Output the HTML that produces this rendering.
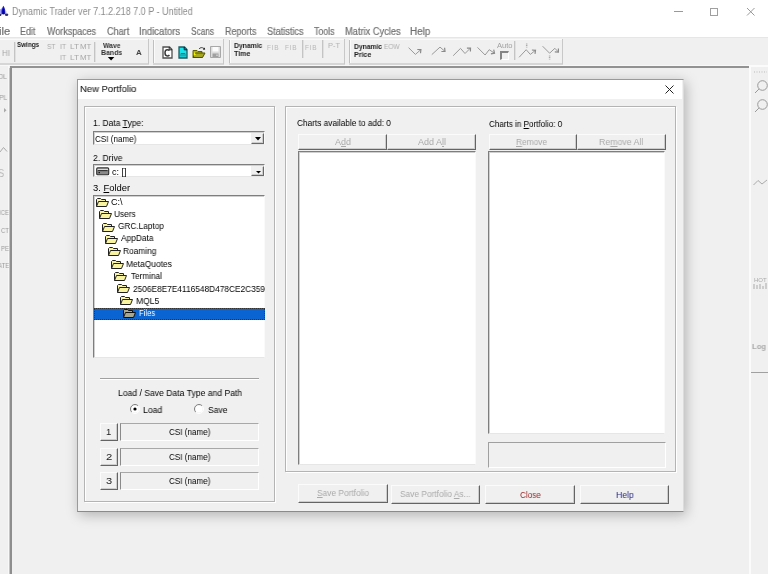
<!DOCTYPE html><html><head><meta charset="utf-8"><style>
*{margin:0;padding:0;box-sizing:border-box}
html,body{width:768px;height:574px;overflow:hidden;background:#f0f0f0;font-family:"Liberation Sans",sans-serif}
.a{position:absolute}
.t{position:absolute;white-space:nowrap;line-height:1;transform-origin:0 0;font-family:"Liberation Sans",sans-serif;will-change:transform;-webkit-text-stroke:0}
.btn{position:absolute;background:#f0f0f0;border-top:1px solid #fbfbfb;border-left:1px solid #fbfbfb;border-right:1px solid #646464;border-bottom:1px solid #646464;box-shadow:inset -1px -1px 0 #cdcdcd}
.sunk{position:absolute;border-top:1px solid #7e7e7e;border-left:1px solid #7e7e7e;border-right:1px solid #fafafa;border-bottom:1px solid #e6e6e6;box-shadow:inset 1px 1px 0 #d0d0d0}
.grp{position:absolute;border:1px solid #b4b4b4;box-shadow:inset 1px 1px 0 #fff, 1px 1px 0 #fff}
.vsep{position:absolute;width:2px;border-left:1px solid #c0c0c0;border-right:1px solid #fff}
</style></head><body>
<div class="a" style="left:0;top:0;width:768px;height:38px;background:#fff"></div>
<svg class="a" style="left:0;top:3px" width="10" height="14" viewBox="0 3 10 14"><path d="M0 9.5L2.2 8V14.5L0 15.5Z" fill="#a0a0f4"/><path d="M3.4 5.8C4.8 8.2 5.8 10.8 5.4 13.2Q3.4 15.6 1.6 13.2C1.1 10.8 2 8.2 3.4 5.8Z" fill="#1818c8"/><path d="M3.4 8C4.2 10 4.6 12 4.3 13.6Q3.4 14.6 2.5 13.6C2.3 12 2.6 10 3.4 8Z" fill="#000090"/><ellipse cx="6.6" cy="14.8" rx="1.7" ry="1.2" fill="#303078"/><ellipse cx="0.4" cy="15" rx="1" ry="1.1" fill="#303058"/><path d="M5.2 10L6.5 12.5" stroke="#c8c8f8" stroke-width="1"/></svg>
<div class="a" style="left:674px;top:11px;width:9px;height:1px;background:#999"></div>
<div class="a" style="left:710px;top:8px;width:8px;height:8px;border:1px solid #a0a0a0"></div>
<svg class="a" style="left:746px;top:7px" width="10" height="10" viewBox="0 0 10 10"><path d="M1 1L8.5 8.5M8.5 1L1 8.5" stroke="#999" stroke-width="1"/></svg>
<div class="a" style="left:0;top:37px;width:768px;height:29px;background:#f0f0f0"></div>
<div class="a" style="left:0;top:37px;width:768px;height:1px;background:#e6e6e6"></div>
<div class="a" style="left:0px;top:39px;width:149px;height:1px;background:#fafafa"></div>
<div class="a" style="left:0px;top:63px;width:149px;height:2px;background:#d6d6d6"></div>
<div class="a" style="left:148px;top:39px;width:1px;height:25px;background:#c8c8c8"></div>
<div class="a" style="left:153px;top:39px;width:71px;height:1px;background:#fafafa"></div>
<div class="a" style="left:153px;top:63px;width:71px;height:2px;background:#d6d6d6"></div>
<div class="a" style="left:223px;top:39px;width:1px;height:25px;background:#c8c8c8"></div>
<div class="a" style="left:229px;top:39px;width:116px;height:1px;background:#fafafa"></div>
<div class="a" style="left:229px;top:63px;width:116px;height:2px;background:#d6d6d6"></div>
<div class="a" style="left:344px;top:39px;width:1px;height:25px;background:#c8c8c8"></div>
<div class="a" style="left:349px;top:39px;width:214px;height:1px;background:#fafafa"></div>
<div class="a" style="left:349px;top:63px;width:214px;height:2px;background:#d6d6d6"></div>
<div class="a" style="left:562px;top:39px;width:1px;height:25px;background:#c8c8c8"></div>
<div class="a" style="left:0;top:65px;width:768px;height:1px;background:#f8f8f8"></div>
<div class="a" style="left:153px;top:40px;width:1px;height:23px;background:#c0c0c0"></div>
<div class="a" style="left:154px;top:40px;width:1px;height:23px;background:#fbfbfb"></div>
<div class="a" style="left:229px;top:40px;width:1px;height:23px;background:#c0c0c0"></div>
<div class="a" style="left:230px;top:40px;width:1px;height:23px;background:#fbfbfb"></div>
<div class="a" style="left:349px;top:40px;width:1px;height:23px;background:#c0c0c0"></div>
<div class="a" style="left:350px;top:40px;width:1px;height:23px;background:#fbfbfb"></div>
<div class="a" style="left:14px;top:42px;width:1px;height:20px;background:#c4c4c4"></div>
<div class="a" style="left:15px;top:42px;width:1px;height:20px;background:#e0e0e0"></div>
<div class="a" style="left:94px;top:42px;width:1px;height:20px;background:#c4c4c4"></div>
<div class="a" style="left:95px;top:42px;width:1px;height:20px;background:#e0e0e0"></div>
<div class="a" style="left:302px;top:40px;width:1px;height:18px;background:#c4c4c4"></div>
<div class="a" style="left:303px;top:40px;width:1px;height:18px;background:#e0e0e0"></div>
<div class="a" style="left:322px;top:40px;width:1px;height:18px;background:#c4c4c4"></div>
<div class="a" style="left:323px;top:40px;width:1px;height:18px;background:#e0e0e0"></div>
<div class="a" style="left:514px;top:41px;width:1px;height:19px;background:#c4c4c4"></div>
<div class="a" style="left:515px;top:41px;width:1px;height:19px;background:#e0e0e0"></div>
<div class="a" style="left:10px;top:66px;width:739px;height:2px;background:#929292"></div>
<div class="a" style="left:10px;top:66px;width:2px;height:508px;background:#8e8e8e"></div>
<div class="a" style="left:9px;top:68px;width:1px;height:506px;background:#c4c4c4"></div>
<div class="a" style="left:8px;top:65px;width:1px;height:509px;background:#f8f8f8"></div>
<div class="a" style="left:749px;top:66px;width:2px;height:508px;background:#fbfbfb"></div>
<div class="a" style="left:749px;top:65px;width:19px;height:2px;background:#fbfbfb"></div>
<div class="a" style="left:751px;top:372px;width:17px;height:1px;background:#a0a0a0"></div>
<div class="a" style="left:77px;top:79px;width:607px;height:433px;background:#f0f0f0;border:1px solid #9a9a9a;border-right-color:#dcdcdc;border-bottom-color:#8a8a8a;box-shadow:2px 3px 12px rgba(0,0,0,0.26)"></div>
<div class="a" style="left:78px;top:80px;width:604px;height:19px;background:#fff"></div>
<svg class="a" style="left:665px;top:85px" width="9" height="9" viewBox="0 0 9 9"><path d="M0.5 0.5L8.5 8.5M8.5 0.5L0.5 8.5" stroke="#222" stroke-width="1"/></svg>
<div class="grp" style="left:84px;top:106px;width:191px;height:396px"></div>
<div class="grp" style="left:285px;top:106px;width:391px;height:366px"></div>
<div class="sunk" style="left:93px;top:131px;width:172px;height:14px;background:#fff"></div>
<div class="btn" style="left:251px;top:133px;width:13px;height:11px;border-color:#f0f0f0 #696969 #696969 #f0f0f0"></div>
<svg class="a" style="left:255px;top:137px" width="6" height="4" viewBox="0 0 6 4"><path d="M0 0H6L3 3.5Z" fill="#000"/></svg>
<div class="sunk" style="left:93px;top:164px;width:172px;height:13px;background:#fff"></div>
<div class="btn" style="left:251px;top:166px;width:13px;height:10px;border-color:#f0f0f0 #696969 #696969 #f0f0f0"></div>
<svg class="a" style="left:256px;top:171px" width="5" height="3" viewBox="0 0 5 3"><path d="M0 0H5L2.5 2.5Z" fill="#000"/></svg>
<svg class="a" style="left:96px;top:167px" width="14" height="9" viewBox="0 0 14 9"><rect x="0.7" y="0.9" width="12" height="6.8" rx="1" fill="#8a8a8a" stroke="#303030" stroke-width="1.1"/><path d="M1.5 2.3H12" stroke="#f0f0f0" stroke-width="1"/><path d="M2 3.6H11.5" stroke="#303030" stroke-width="1.1"/><rect x="2.6" y="5" width="1.2" height="1.2" fill="#000"/></svg>
<div class="sunk" style="left:93px;top:195px;width:172px;height:163px;background:#fff"></div>
<div class="a" style="left:94px;top:308px;width:171px;height:12px;background:#0a64d2;outline:1px dotted #333;outline-offset:-1px"></div>
<svg class="a" style="left:96px;top:198px" width="13" height="9" viewBox="0 0 13 9"><path d="M0.5 8.5V1.5L1.5 0.5H4.5L5.5 1.5H9.5V3.5" fill="#f8f4a0" stroke="#222" stroke-width="1"/><path d="M0.5 8.5L2.5 3.5H12.5L10.5 8.5Z" fill="#f8f4a0" stroke="#222" stroke-width="1"/></svg>
<svg class="a" style="left:99px;top:210px" width="13" height="9" viewBox="0 0 13 9"><path d="M0.5 8.5V1.5L1.5 0.5H4.5L5.5 1.5H9.5V3.5" fill="#f8f4a0" stroke="#222" stroke-width="1"/><path d="M0.5 8.5L2.5 3.5H12.5L10.5 8.5Z" fill="#f8f4a0" stroke="#222" stroke-width="1"/></svg>
<svg class="a" style="left:102px;top:223px" width="13" height="9" viewBox="0 0 13 9"><path d="M0.5 8.5V1.5L1.5 0.5H4.5L5.5 1.5H9.5V3.5" fill="#f8f4a0" stroke="#222" stroke-width="1"/><path d="M0.5 8.5L2.5 3.5H12.5L10.5 8.5Z" fill="#f8f4a0" stroke="#222" stroke-width="1"/></svg>
<svg class="a" style="left:105px;top:235px" width="13" height="9" viewBox="0 0 13 9"><path d="M0.5 8.5V1.5L1.5 0.5H4.5L5.5 1.5H9.5V3.5" fill="#f8f4a0" stroke="#222" stroke-width="1"/><path d="M0.5 8.5L2.5 3.5H12.5L10.5 8.5Z" fill="#f8f4a0" stroke="#222" stroke-width="1"/></svg>
<svg class="a" style="left:108px;top:247px" width="13" height="9" viewBox="0 0 13 9"><path d="M0.5 8.5V1.5L1.5 0.5H4.5L5.5 1.5H9.5V3.5" fill="#f8f4a0" stroke="#222" stroke-width="1"/><path d="M0.5 8.5L2.5 3.5H12.5L10.5 8.5Z" fill="#f8f4a0" stroke="#222" stroke-width="1"/></svg>
<svg class="a" style="left:111px;top:260px" width="13" height="9" viewBox="0 0 13 9"><path d="M0.5 8.5V1.5L1.5 0.5H4.5L5.5 1.5H9.5V3.5" fill="#f8f4a0" stroke="#222" stroke-width="1"/><path d="M0.5 8.5L2.5 3.5H12.5L10.5 8.5Z" fill="#f8f4a0" stroke="#222" stroke-width="1"/></svg>
<svg class="a" style="left:114px;top:272px" width="13" height="9" viewBox="0 0 13 9"><path d="M0.5 8.5V1.5L1.5 0.5H4.5L5.5 1.5H9.5V3.5" fill="#f8f4a0" stroke="#222" stroke-width="1"/><path d="M0.5 8.5L2.5 3.5H12.5L10.5 8.5Z" fill="#f8f4a0" stroke="#222" stroke-width="1"/></svg>
<svg class="a" style="left:117px;top:284px" width="13" height="9" viewBox="0 0 13 9"><path d="M0.5 8.5V1.5L1.5 0.5H4.5L5.5 1.5H9.5V3.5" fill="#f8f4a0" stroke="#222" stroke-width="1"/><path d="M0.5 8.5L2.5 3.5H12.5L10.5 8.5Z" fill="#f8f4a0" stroke="#222" stroke-width="1"/></svg>
<svg class="a" style="left:120px;top:296px" width="13" height="9" viewBox="0 0 13 9"><path d="M0.5 8.5V1.5L1.5 0.5H4.5L5.5 1.5H9.5V3.5" fill="#f8f4a0" stroke="#222" stroke-width="1"/><path d="M0.5 8.5L2.5 3.5H12.5L10.5 8.5Z" fill="#f8f4a0" stroke="#222" stroke-width="1"/></svg>
<svg class="a" style="left:123px;top:309px" width="13" height="9" viewBox="0 0 13 9"><path d="M0.5 8.5V1.5L1.5 0.5H4.5L5.5 1.5H9.5V3.5" fill="#a8a890" stroke="#111" stroke-width="1"/><path d="M0.5 8.5L2.5 3.5H12.5L10.5 8.5Z" fill="#a8a890" stroke="#111" stroke-width="1"/></svg>
<div class="a" style="left:100px;top:378px;width:159px;height:1px;background:#a0a0a0"></div>
<div class="a" style="left:100px;top:379px;width:159px;height:1px;background:#fff"></div>
<svg class="a" style="left:129px;top:403.3px" width="12" height="12" viewBox="129 403.3 12 12"><circle cx="135" cy="409.3" r="3.6" fill="#fff"/><path d="M138.2 406.1A4.5 4.5 0 0 0 131.8 412.5" fill="none" stroke="#808080" stroke-width="1"/><path d="M138.2 406.1A4.5 4.5 0 0 1 131.8 412.5" fill="none" stroke="#fff" stroke-width="1"/><circle cx="135" cy="409.3" r="1.6" fill="#000"/></svg>
<svg class="a" style="left:192.5px;top:403.3px" width="12" height="12" viewBox="192.5 403.3 12 12"><circle cx="198.5" cy="409.3" r="3.6" fill="#fff"/><path d="M201.7 406.1A4.5 4.5 0 0 0 195.3 412.5" fill="none" stroke="#808080" stroke-width="1"/><path d="M201.7 406.1A4.5 4.5 0 0 1 195.3 412.5" fill="none" stroke="#fff" stroke-width="1"/></svg>
<div class="btn" style="left:100px;top:423px;width:18px;height:18px"></div>
<div class="a" style="left:120px;top:423px;width:139px;height:18px;background:#f0f0f0;border-top:1px solid #a8a8a8;border-left:1px solid #8a8a8a;border-right:1px solid #fff;border-bottom:1px solid #fff"></div>
<div class="btn" style="left:100px;top:448px;width:18px;height:18px"></div>
<div class="a" style="left:120px;top:448px;width:139px;height:18px;background:#f0f0f0;border-top:1px solid #a8a8a8;border-left:1px solid #8a8a8a;border-right:1px solid #fff;border-bottom:1px solid #fff"></div>
<div class="btn" style="left:100px;top:472px;width:18px;height:18px"></div>
<div class="a" style="left:120px;top:472px;width:139px;height:18px;background:#f0f0f0;border-top:1px solid #a8a8a8;border-left:1px solid #8a8a8a;border-right:1px solid #fff;border-bottom:1px solid #fff"></div>
<div class="btn" style="left:298px;top:134px;width:89px;height:16px"></div>
<div class="btn" style="left:387px;top:134px;width:89px;height:16px;border-left-color:#f0f0f0"></div>
<div class="btn" style="left:489px;top:134px;width:88px;height:16px"></div>
<div class="btn" style="left:577px;top:134px;width:89px;height:16px;border-left-color:#f0f0f0"></div>
<div class="sunk" style="left:298px;top:151px;width:178px;height:314px;background:#fff"></div>
<div class="sunk" style="left:488px;top:151px;width:177px;height:283px;background:#fff"></div>
<div class="a" style="left:488px;top:442px;width:178px;height:26px;background:#f0f0f0;border-top:1px solid #a0a0a0;border-left:1px solid #a0a0a0;border-right:1px solid #fff;border-bottom:1px solid #fff"></div>
<div class="btn" style="left:298px;top:484px;width:90px;height:19px"></div>
<div class="btn" style="left:391px;top:485px;width:89px;height:19px"></div>
<div class="btn" style="left:485px;top:485px;width:90px;height:19px"></div>
<div class="btn" style="left:580px;top:485px;width:89px;height:19px"></div>
<svg class="a" style="left:162px;top:46px" width="11" height="13" viewBox="0 0 11 13"><path d="M1 1H7.5L10 3.5V12H1Z" fill="#fff" stroke="#505050" stroke-width="1.3"/><path d="M7.2 1V3.8H10" fill="none" stroke="#222" stroke-width="1"/><path d="M7.4 4.6Q6.8 3.7 5.3 3.7Q3 3.7 3 6.8Q3 9.9 5.3 9.9Q6.8 9.9 7.4 9" fill="none" stroke="#3a3a3a" stroke-width="1.5"/></svg>
<svg class="a" style="left:178px;top:46px" width="10" height="13" viewBox="0 0 10 13"><path d="M1 1H6.5L9 3.5V12H1Z" fill="#18e4ec" stroke="#1e5a60" stroke-width="1.3"/><path d="M6.2 1V3.8H9" fill="none" stroke="#113" stroke-width="1"/><path d="M3 10.5V7.5H7V10.5M5 7.5V10.5" fill="none" stroke="#1a7078" stroke-width="0.9"/></svg>
<svg class="a" style="left:192px;top:46px" width="14" height="13" viewBox="0 0 14 13"><path d="M1 4.5H5L6 5.5H10V11.5H1Z" fill="#b8b800" stroke="#606000" stroke-width="1"/><path d="M1 11.5L3.5 7H13L10.5 11.5Z" fill="#a8a820" stroke="#505000" stroke-width="1"/><path d="M2 6L4 8.5L2 10Z" fill="#f4f400"/><path d="M7 3C8 1.5 10 1 12 2.5" fill="none" stroke="#333" stroke-width="0.9"/><path d="M11 3.8L13.2 3.6L12.4 1.5Z" fill="#000"/></svg>
<svg class="a" style="left:210px;top:46px" width="11" height="12" viewBox="0 0 11 12"><path d="M0.5 0.5H10.5V11.5H0.5Z" fill="#dcdcdc" stroke="#a8a8a8" stroke-width="1"/><path d="M2.5 1H8.5V5.5H2.5Z" fill="#fcfcfc"/><path d="M2.5 7.5H8.5V11H2.5Z" fill="#a0a0a0"/><path d="M6.5 8.5H7.5V10H6.5Z" fill="#eee"/></svg>
<svg class="a" style="left:400px;top:40px" width="165" height="24" viewBox="400 40 165 24"><path d="M408.6 47.7L415.4 54.4L420.9 49.6" fill="none" stroke="#9a9a9a" stroke-width="1"/><path d="M420.5 53.2L420.9 49.6L417.3 49.5" fill="none" stroke="#8a8a8a" stroke-width="1.2"/><path d="M431.8 54.6L440.0 47.1L445.0 51.4" fill="none" stroke="#9a9a9a" stroke-width="1"/><path d="M441.4 51.5L445.0 51.4L444.6 47.8" fill="none" stroke="#8a8a8a" stroke-width="1.2"/><path d="M453.2 55.7L460.5 48.4L465.0 53.5L470.5 48.0" fill="none" stroke="#9a9a9a" stroke-width="1"/><path d="M470.4 51.6L470.5 48.0L466.9 48.1" fill="none" stroke="#8a8a8a" stroke-width="1.2"/><path d="M477.5 47.4L485.1 55.0L489.2 49.7L494.5 53.2" fill="none" stroke="#9a9a9a" stroke-width="1"/><path d="M490.9 53.8L494.5 53.2L493.7 49.7" fill="none" stroke="#8a8a8a" stroke-width="1.2"/><path d="M519.1 57.3L526.2 49.7L530.3 54.4L535.5 50.3" fill="none" stroke="#9a9a9a" stroke-width="1"/><path d="M535.0 53.9L535.5 50.3L531.9 50.0" fill="none" stroke="#8a8a8a" stroke-width="1.2"/><path d="M542.6 46.2L549.6 53.2L554.9 48.3L558.4 52.0" fill="none" stroke="#9a9a9a" stroke-width="1"/><path d="M554.8 51.8L558.4 52.0L558.4 48.4" fill="none" stroke="#8a8a8a" stroke-width="1.2"/><path d="M526.7 43.5V47.5M549.6 55.5V59.5" stroke="#aaa" stroke-width="1.5" stroke-dasharray="1 0.6"/></svg>
<div class="a" style="left:500px;top:51px;width:9px;height:9px;background:#f0f0f0;border-top:2px solid #858585;border-left:2px solid #858585;border-right:1px solid #fff;border-bottom:1px solid #fff"></div>
<svg class="a" style="left:750px;top:70px" width="18" height="220" viewBox="750 70 18 220"><circle cx="762.5" cy="85.5" r="4.8" fill="none" stroke="#999" stroke-width="1"/><path d="M758.9 89.1L755 93" stroke="#999" stroke-width="1"/><circle cx="762.5" cy="104.5" r="4.8" fill="none" stroke="#999" stroke-width="1"/><path d="M758.9 108.1L755 112" stroke="#999" stroke-width="1"/><path d="M753.5 185L758 180.5L762 184L767 180" fill="none" stroke="#aaa" stroke-width="1"/><path d="M754 284V289M757 285V289M760 284V289M763 286V289M766 283V289" stroke="#aaa" stroke-width="1"/><path d="M754 72H767" stroke="#bbb" stroke-width="1" stroke-dasharray="1 1.5"/></svg>
<svg class="a" style="left:0;top:100px" width="10" height="60" viewBox="0 100 10 60"><path d="M4 108L6.5 110.2L4 112.5Z" fill="#aaa"/><path d="M0 152L3.5 147.5L7 151.5" fill="none" stroke="#aaa" stroke-width="1"/></svg>
<svg class="a" style="left:107px;top:57px" width="8" height="4" viewBox="0 0 8 4"><path d="M0.8 0H7.4L4.1 3.4Z" fill="#000"/></svg>
<div class="t" style="left:11.88px;top:7px;font-size:10.3px;color:#8c8c8c;font-weight:normal;transform:scaleX(0.875);-webkit-text-stroke:0">Dynamic Trader ver 7.1.2.218 7.0 P - Untitled</div>
<div class="t" style="left:-0.79px;top:27px;font-size:10px;color:#707070;font-weight:normal;transform:scaleX(1.124);-webkit-text-stroke:0.2px currentColor">ile</div>
<div class="t" style="left:20.49px;top:27px;font-size:10px;color:#707070;font-weight:normal;transform:scaleX(0.890);-webkit-text-stroke:0.2px currentColor">Edit</div>
<div class="t" style="left:47.21px;top:27px;font-size:10px;color:#707070;font-weight:normal;transform:scaleX(0.895);-webkit-text-stroke:0.2px currentColor">Workspaces</div>
<div class="t" style="left:106.85px;top:27px;font-size:10px;color:#707070;font-weight:normal;transform:scaleX(0.908);-webkit-text-stroke:0.2px currentColor">Chart</div>
<div class="t" style="left:139.14px;top:27px;font-size:10px;color:#707070;font-weight:normal;transform:scaleX(0.950);-webkit-text-stroke:0.2px currentColor">Indicators</div>
<div class="t" style="left:191.29px;top:27px;font-size:10px;color:#707070;font-weight:normal;transform:scaleX(0.829);-webkit-text-stroke:0.2px currentColor">Scans</div>
<div class="t" style="left:224.88px;top:27px;font-size:10px;color:#707070;font-weight:normal;transform:scaleX(0.897);-webkit-text-stroke:0.2px currentColor">Reports</div>
<div class="t" style="left:266.54px;top:27px;font-size:10px;color:#707070;font-weight:normal;transform:scaleX(0.913);-webkit-text-stroke:0.2px currentColor">Statistics</div>
<div class="t" style="left:314.22px;top:27px;font-size:10px;color:#707070;font-weight:normal;transform:scaleX(0.882);-webkit-text-stroke:0.2px currentColor">Tools</div>
<div class="t" style="left:344.76px;top:27px;font-size:10px;color:#707070;font-weight:normal;transform:scaleX(0.927);-webkit-text-stroke:0.2px currentColor">Matrix Cycles</div>
<div class="t" style="left:410.21px;top:27px;font-size:10px;color:#707070;font-weight:normal;transform:scaleX(0.984);-webkit-text-stroke:0.2px currentColor">Help</div>
<div class="t" style="left:2.37px;top:49px;font-size:8.5px;color:#a4a4a4;font-weight:normal;transform:scaleX(0.921);">HI</div>
<div class="t" style="left:17.41px;top:41px;font-size:7.5px;color:#222;font-weight:bold;transform:scaleX(0.844);-webkit-text-stroke:0;">Swings</div>
<div class="t" style="left:47.37px;top:43px;font-size:7.5px;color:#a8a8a8;font-weight:normal;transform:scaleX(0.882);">ST</div>
<div class="t" style="left:59.98px;top:43px;font-size:7.5px;color:#a8a8a8;font-weight:normal;transform:scaleX(0.923);">IT</div>
<div class="t" style="left:70.34px;top:43px;font-size:7.5px;color:#a8a8a8;font-weight:normal;transform:scaleX(1.104);">LT</div>
<div class="t" style="left:80.27px;top:43px;font-size:7.5px;color:#a8a8a8;font-weight:normal;transform:scaleX(1.055);">MT</div>
<div class="t" style="left:59.98px;top:54px;font-size:7.5px;color:#a8a8a8;font-weight:normal;transform:scaleX(0.923);">IT</div>
<div class="t" style="left:70.34px;top:54px;font-size:7.5px;color:#a8a8a8;font-weight:normal;transform:scaleX(1.104);">LT</div>
<div class="t" style="left:80.27px;top:54px;font-size:7.5px;color:#a8a8a8;font-weight:normal;transform:scaleX(1.055);">MT</div>
<div class="t" style="left:102.80px;top:42px;font-size:7.5px;color:#333;font-weight:bold;transform:scaleX(0.903);">Wave</div>
<div class="t" style="left:101.41px;top:49px;font-size:7.5px;color:#333;font-weight:bold;transform:scaleX(0.930);">Bands</div>
<div class="t" style="left:135.77px;top:49px;font-size:8px;color:#444;font-weight:bold;transform:scaleX(0.947);">A</div>
<div class="t" style="left:233.52px;top:42px;font-size:7.5px;color:#222;font-weight:bold;transform:scaleX(0.907);-webkit-text-stroke:0;">Dynamic</div>
<div class="t" style="left:233.93px;top:50px;font-size:7.5px;color:#222;font-weight:bold;transform:scaleX(0.940);-webkit-text-stroke:0;">Time</div>
<div class="t" style="left:266.98px;top:45px;font-size:6.5px;color:#b8b8b8;font-weight:normal;letter-spacing:0.7px;transform:none">FIB</div>
<div class="t" style="left:285.08px;top:45px;font-size:6.5px;color:#b8b8b8;font-weight:normal;letter-spacing:0.7px;transform:none">FIB</div>
<div class="t" style="left:305.48px;top:45px;font-size:6.5px;color:#b8b8b8;font-weight:normal;letter-spacing:0.7px;transform:none">FIB</div>
<div class="t" style="left:328.32px;top:42px;font-size:7.5px;color:#b4b4b4;font-weight:normal;transform:scaleX(0.962);">P-T</div>
<div class="t" style="left:353.53px;top:43px;font-size:7.5px;color:#222;font-weight:bold;transform:scaleX(0.898);-webkit-text-stroke:0;">Dynamic</div>
<div class="t" style="left:353.51px;top:51px;font-size:7.5px;color:#222;font-weight:bold;transform:scaleX(0.940);-webkit-text-stroke:0;">Price</div>
<div class="t" style="left:384.48px;top:43px;font-size:7.5px;color:#b0b0b0;font-weight:normal;transform:scaleX(0.870);">EOW</div>
<div class="t" style="left:496.90px;top:42px;font-size:7.5px;color:#a0a0a0;font-weight:normal;transform:scaleX(1.008);">Auto</div>
<div class="t" style="left:-2.18px;top:73px;font-size:7.5px;color:#999;font-weight:normal;transform:scaleX(0.9)">OL</div>
<div class="t" style="left:-1.43px;top:94px;font-size:7.5px;color:#999;font-weight:normal;transform:scaleX(0.9)">PL</div>
<div class="t" style="left:-1.24px;top:209px;font-size:7px;color:#9c9c9c;font-weight:normal;transform:scaleX(0.85)">ICE</div>
<div class="t" style="left:0.61px;top:227px;font-size:7px;color:#9c9c9c;font-weight:normal;transform:scaleX(0.85)">CT</div>
<div class="t" style="left:0.72px;top:245px;font-size:7px;color:#9c9c9c;font-weight:normal;transform:scaleX(0.85)">PE</div>
<div class="t" style="left:-2.49px;top:262px;font-size:7px;color:#9c9c9c;font-weight:normal;transform:scaleX(0.85)">ATE</div>
<div class="t" style="left:-2.50px;top:168px;font-size:11.5px;color:#b8b8b8;font-weight:normal;transform:scaleX(0.8)">S</div>
<div class="t" style="left:752.46px;top:343px;font-size:8px;color:#aaa;font-weight:bold;transform:scaleX(0.956);">Log</div>
<div class="t" style="left:753.52px;top:277px;font-size:6px;color:#aaa;font-weight:normal;transform:scaleX(0.995);">HOT</div>
<div class="t" style="left:80.24px;top:84px;font-size:9.8px;color:#222;font-weight:normal;transform:scaleX(0.968);-webkit-text-stroke:0.1px currentColor;">New Portfolio</div>
<div class="t" style="left:92.62px;top:119px;font-size:9px;color:#000;font-weight:normal;transform:scaleX(0.945);">1. Data <u>T</u>ype:</div>
<div class="t" style="left:95.30px;top:135px;font-size:9px;color:#000;font-weight:normal;transform:scaleX(0.900);">CSI (name)</div>
<div class="t" style="left:92.57px;top:154px;font-size:9px;color:#000;font-weight:normal;transform:scaleX(0.949);">2. Drive</div>
<div class="t" style="left:112.04px;top:168px;font-size:9px;color:#000;font-weight:normal;transform:scaleX(1.000);">c: []</div>
<div class="t" style="left:92.52px;top:184px;font-size:9px;color:#000;font-weight:normal;transform:scaleX(1.045);">3. <u>F</u>older</div>
<div class="t" style="left:111.25px;top:198px;font-size:9px;color:#000;font-weight:normal;transform:scaleX(1.011);">C:&#92;</div>
<div class="t" style="left:114.04px;top:210px;font-size:9px;color:#000;font-weight:normal;transform:scaleX(0.920);">Users</div>
<div class="t" style="left:117.59px;top:222px;font-size:9px;color:#000;font-weight:normal;transform:scaleX(0.918);">GRC.Laptop</div>
<div class="t" style="left:120.70px;top:234px;font-size:9px;color:#000;font-weight:normal;transform:scaleX(0.928);">AppData</div>
<div class="t" style="left:123.33px;top:247px;font-size:9px;color:#000;font-weight:normal;transform:scaleX(0.927);">Roaming</div>
<div class="t" style="left:126.33px;top:260px;font-size:9px;color:#000;font-weight:normal;transform:scaleX(0.936);">MetaQuotes</div>
<div class="t" style="left:130.54px;top:272px;font-size:9px;color:#000;font-weight:normal;transform:scaleX(0.909);">Terminal</div>
<div class="t" style="left:132.98px;top:285px;font-size:9px;color:#000;font-weight:normal;transform:scaleX(0.923);">2506E8E7E4116548D478CE2C359</div>
<div class="t" style="left:135.82px;top:297px;font-size:9px;color:#000;font-weight:normal;transform:scaleX(0.949);">MQL5</div>
<div class="t" style="left:139.19px;top:309px;font-size:9px;color:#fff;font-weight:normal;transform:scaleX(0.850);">Files</div>
<div class="t" style="left:117.91px;top:389px;font-size:9px;color:#000;font-weight:normal;transform:scaleX(0.955);">Load / Save Data Type and Path</div>
<div class="t" style="left:143.31px;top:406px;font-size:9px;color:#000;font-weight:normal;transform:scaleX(0.962);">Load</div>
<div class="t" style="left:207.57px;top:406px;font-size:9px;color:#000;font-weight:normal;transform:scaleX(0.953);">Save</div>
<div class="t" style="left:106.44px;top:427px;font-size:9.5px;color:#222;font-weight:normal;transform:none">1</div>
<div class="t" style="left:169.09px;top:428px;font-size:9px;color:#000;font-weight:normal;transform:scaleX(0.900);">CSI (name)</div>
<div class="t" style="left:106.23px;top:452px;font-size:9.5px;color:#222;font-weight:normal;transform:scaleX(1.190);">2</div>
<div class="t" style="left:169.09px;top:453px;font-size:9px;color:#000;font-weight:normal;transform:scaleX(0.900);">CSI (name)</div>
<div class="t" style="left:106.36px;top:476px;font-size:9.5px;color:#222;font-weight:normal;transform:scaleX(1.165);">3</div>
<div class="t" style="left:169.09px;top:477px;font-size:9px;color:#000;font-weight:normal;transform:scaleX(0.900);">CSI (name)</div>
<div class="t" style="left:297.49px;top:119px;font-size:9px;color:#000;font-weight:normal;transform:scaleX(0.920);">Charts available to add: 0</div>
<div class="t" style="left:489.10px;top:120px;font-size:9px;color:#000;font-weight:normal;transform:scaleX(0.898);">Charts in <u>P</u>ortfolio: 0</div>
<div class="t" style="left:335.00px;top:138px;font-size:9px;color:#aaa;font-weight:normal;transform:scaleX(0.975);">A<u>d</u>d</div>
<div class="t" style="left:418.00px;top:138px;font-size:9px;color:#aaa;font-weight:normal;transform:scaleX(0.984);">Add A<u>l</u>l</div>
<div class="t" style="left:516.33px;top:138px;font-size:9px;color:#aaa;font-weight:normal;transform:scaleX(0.926);"><u>R</u>emove</div>
<div class="t" style="left:599.30px;top:138px;font-size:9px;color:#aaa;font-weight:normal;transform:scaleX(0.973);">Re<u>m</u>ove All</div>
<div class="t" style="left:316.78px;top:489px;font-size:9px;color:#aaa;font-weight:normal;transform:scaleX(0.930);"><u>S</u>ave Portfolio</div>
<div class="t" style="left:400.38px;top:490px;font-size:9px;color:#aaa;font-weight:normal;transform:scaleX(0.928);">Save Portfolio <u>A</u>s...</div>
<div class="t" style="left:519.69px;top:491px;font-size:9px;color:#9a2626;font-weight:normal;transform:scaleX(0.908);">Close</div>
<div class="t" style="left:615.61px;top:491px;font-size:9px;color:#2a2a86;font-weight:normal;transform:scaleX(0.961);">Help</div>
</body></html>
